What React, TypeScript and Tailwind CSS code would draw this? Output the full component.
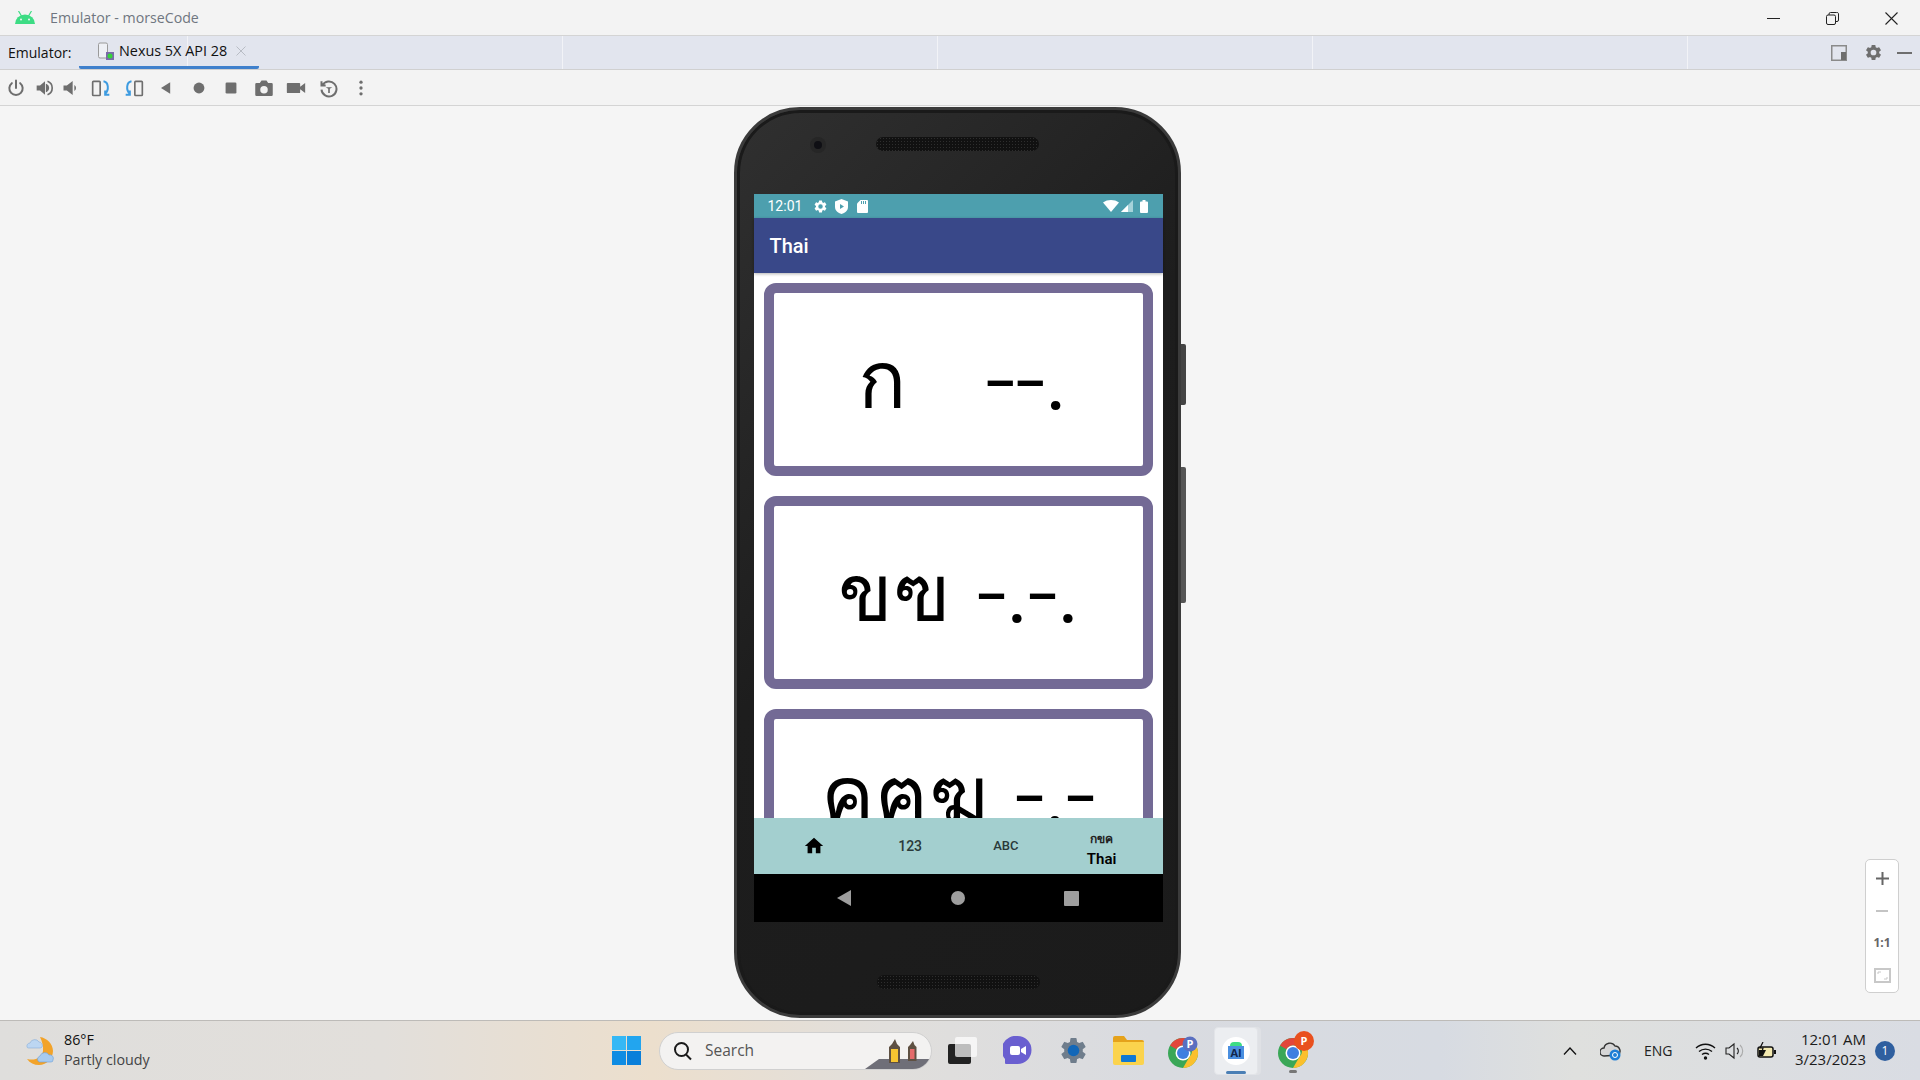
const Gear = ({ size = 16, color = "#6e6e6e" }: { size?: number; color?: string }) => (
  <svg width={size} height={size} viewBox="0 0 24 24" fill={color}>
    <path d="M19.14 12.94c.04-.3.06-.61.06-.94s-.02-.64-.07-.94l2.03-1.58a.5.5 0 0 0 .12-.61l-1.92-3.32a.5.5 0 0 0-.59-.22l-2.39.96a7 7 0 0 0-1.62-.94l-.36-2.54a.5.5 0 0 0-.48-.41h-3.84a.5.5 0 0 0-.48.41l-.36 2.54c-.59.24-1.13.57-1.62.94l-2.39-.96a.5.5 0 0 0-.59.22L2.72 8.87a.5.5 0 0 0 .12.61l2.03 1.58c-.05.3-.07.63-.07.94s.02.64.07.94l-2.03 1.58a.5.5 0 0 0-.12.61l1.92 3.32c.12.22.37.29.59.22l2.39-.96c.5.38 1.03.7 1.62.94l.36 2.54c.05.24.24.41.48.41h3.84c.24 0 .44-.17.48-.41l.36-2.54c.59-.24 1.13-.56 1.62-.94l2.39.96c.22.08.47 0 .59-.22l1.92-3.32a.5.5 0 0 0-.12-.61l-2.01-1.58zM12 15.6A3.6 3.6 0 1 1 12 8.4a3.6 3.6 0 0 1 0 7.2z" />
  </svg>
);

const gray = "#6e6e6e";
const blue = "#3d9be0";

const toolIcons = [
  { cls: "ml-[6px]", node: <path d="M12 3v9M7 6.2a8 8 0 1 0 10 0" fill="none" stroke={gray} strokeWidth="2.4" strokeLinecap="round" /> },
  { cls: "ml-[9px]", node: <><path d="M2 9h4l6-5v16l-6-5H2z" fill={gray} /><path d="M14 8.5a4 4 0 0 1 0 7zM15 4a8.5 8.5 0 0 1 0 16" fill="none" stroke={gray} strokeWidth="2" /></> },
  { cls: "ml-[6px]", node: <><path d="M3 9h4l7-5.5v17L7 15H3z" fill={gray} /><path d="M16 8.5a4 4 0 0 1 0 7z" fill={gray} /></> },
  { cls: "ml-[10px]", node: <><rect x="2" y="4" width="9" height="17" rx="1" fill="none" stroke={gray} strokeWidth="2" /><path d="M15 4c6 1 7 10 2 15M17 15v5h5" fill="none" stroke={blue} strokeWidth="2.4" /></> },
  { cls: "ml-[13px]", node: <><rect x="13" y="4" width="9" height="17" rx="1" fill="none" stroke={gray} strokeWidth="2" /><path d="M9 4C3 5 2 14 7 19M7 15v5H2" fill="none" stroke={blue} strokeWidth="2.4" /></> },
  { cls: "ml-[12px]", node: <path d="M17 5v14L6 12z" fill={gray} /> },
  { cls: "ml-[13px]", node: <circle cx="12" cy="12" r="6.5" fill={gray} /> },
  { cls: "ml-[12px]", node: <rect x="5.5" y="5.5" width="13" height="13" rx="1.5" fill={gray} /> },
  { cls: "ml-[13px]", node: <path d="M3 6h4l2-3h6l2 3h4a1.5 1.5 0 0 1 1.5 1.5V20a1.5 1.5 0 0 1-1.5 1.5H3A1.5 1.5 0 0 1 1.5 20V7.5A1.5 1.5 0 0 1 3 6zm9 3.5a4.5 4.5 0 1 0 0 9 4.5 4.5 0 0 0 0-9z" fill={gray} /> },
  { cls: "ml-[12px]", node: <path d="M2 6h14a1 1 0 0 1 1 1v3.5L23 6v12l-6-4.5V17a1 1 0 0 1-1 1H2a1 1 0 0 1-1-1V7a1 1 0 0 1 1-1z" fill={gray} /> },
  { cls: "ml-[13px]", node: <><path d="M3 4v5h5M4 9a9 9 0 1 1-1 5" fill="none" stroke={gray} strokeWidth="2.4" /><path d="M8 11h8l-3 2v5h-2v-5z" fill={gray} /></> },
  { cls: "ml-[12px]", node: <><circle cx="12" cy="5" r="2" fill={gray} /><circle cx="12" cy="12" r="2" fill={gray} /><circle cx="12" cy="19" r="2" fill={gray} /></> },
];

function TitleBar() {
  return (
    <div className="flex h-[34px] items-center bg-[#f3f3f3] border-b border-[#d4d4d4] pt-px shrink-0 box-content">
      <svg className="ml-[15px]" width="20" height="14" viewBox="0 0 20 14" fill="#3ddc84">
        <path d="M0 13a10 9.5 0 0 1 20 0z" />
        <path d="M3.5 0l3 5M16.5 0l-3 5" stroke="#3ddc84" strokeWidth="1.2" />
        <circle cx="6" cy="8.5" r="1" fill="#f3f3f3" />
        <circle cx="14" cy="8.5" r="1" fill="#f3f3f3" />
      </svg>
      <span className="ml-[15px] text-[14.2px] text-[#6f7680]">Emulator - morseCode</span>
      <div className="ml-auto flex items-center">
        <div className="h-px w-[13px] bg-[#222]" />
        <svg className="ml-[46px]" width="13" height="13" viewBox="0 0 13 13" fill="none" stroke="#222">
          <rect x="0.5" y="3" width="9" height="9.5" rx="1.5" />
          <path d="M3 3V2a1.5 1.5 0 0 1 1.5-1.5h6A1.5 1.5 0 0 1 12.5 2v6A1.5 1.5 0 0 1 11 9.5H9.5" />
        </svg>
        <svg className="ml-[46px] mr-[22px]" width="13" height="13" viewBox="0 0 13 13" stroke="#222" strokeWidth="1.1">
          <path d="M0.5 0.5l12 12M12.5 0.5l-12 12" />
        </svg>
      </div>
    </div>
  );
}

function TabBar() {
  return (
    <div className="relative flex h-[33px] items-center bg-[#e2e5ee] border-b border-[#d0d0d0] shrink-0 box-content">
      <div className="absolute inset-0 flex pointer-events-none">
        <div className="w-[188px] border-r border-[#f2f3f7]" />
        <div className="w-[375px] border-r border-[#f2f3f7]" />
        <div className="w-[375px] border-r border-[#f2f3f7]" />
        <div className="w-[375px] border-r border-[#f2f3f7]" />
        <div className="w-[375px] border-r border-[#f2f3f7]" />
      </div>
      <span className="relative ml-[8px] w-[71px] text-[14px] text-[#111]">Emulator:</span>
      <div className="relative flex h-[33px] w-[180px] items-center border-b-[3px] border-[#3f80cc] pl-[19px] rounded-b-[2px]">
        <svg width="16" height="18" viewBox="0 0 16 18">
          <rect x="0.5" y="1" width="9" height="15" rx="1.5" fill="#eef0f5" stroke="#9a9a9a" />
          <rect x="8" y="10" width="8" height="8" fill="#7a6aa8" />
          <circle cx="12" cy="14" r="2.5" fill="#35d43a" />
        </svg>
        <span className="ml-[5px] text-[14.4px] text-[#111]">Nexus 5X API 28</span>
        <svg className="ml-[9px]" width="10" height="10" viewBox="0 0 10 10" stroke="#b8bcc4" strokeWidth="1">
          <path d="M0.5 0.5l9 9M9.5 0.5l-9 9" />
        </svg>
      </div>
      <div className="relative ml-auto flex items-center">
        <svg width="16" height="16" viewBox="0 0 16 16">
          <rect x="0.75" y="0.75" width="14.5" height="14.5" fill="none" stroke="#8a8a8a" strokeWidth="1.5" />
          <rect x="10" y="7" width="5" height="8" fill="#6e6e6e" />
        </svg>
        <div className="ml-[17px]">
          <Gear size={19} />
        </div>
        <div className="ml-[14px] mr-[8px] h-[2px] w-[15px] bg-[#6e6e6e]" />
      </div>
    </div>
  );
}

function ToolBar() {
  return (
    <div className="flex h-[35px] items-center bg-[#f3f3f3] border-b border-[#d4d4d4] shrink-0 box-content">
      {toolIcons.map((icon, i) => (
        <svg key={i} className={icon.cls} width="20" height="20" viewBox="0 0 24 24">
          {icon.node}
        </svg>
      ))}
    </div>
  );
}

function MorseCard({ letters, code, className = "" }: { letters: string; code: string; className?: string }) {
  return (
    <div className={`flex h-[193px] shrink-0 items-center justify-center rounded-[12px] border-[10px] border-[#736a95] bg-white text-black ${className}`}>
      <div className="flex items-baseline whitespace-pre font-['Roboto','Noto_Sans',sans-serif] font-light text-[108px] leading-none">
        <span className="relative -top-[9px] text-[80px] font-normal">{letters}</span>
        {code.split("").map((c, i) =>
          c === "." ? (
            <span key={i} className="relative -top-[7px] inline-block w-[21px] text-center text-[84px] font-normal">.</span>
          ) : c === "-" ? (
            <span key={i} className="inline-block w-[30px] text-center">-</span>
          ) : (
            <span key={i}> </span>
          )
        )}
      </div>
    </div>
  );
}

function PhoneScreen() {
  return (
    <div className="flex h-[728px] w-[409px] flex-col font-['Roboto',sans-serif]">
      <div className="flex h-[24px] shrink-0 items-center bg-[#4d9fae] pl-[14px] pr-[15px] text-white">
        <span className="text-[14px]">12:01</span>
        <div className="ml-[11px]"><Gear size={15} color="#fff" /></div>
        <svg className="ml-[7px]" width="13" height="15" viewBox="0 0 13 15">
          <path d="M6.5 0L13 2.5V8c0 3.5-3 6-6.5 7C3 14 0 11.5 0 8V2.5z" fill="#fff" />
          <path d="M5 5l4 2.5L5 10z" fill="#4d9fae" />
        </svg>
        <svg className="ml-[9px]" width="11" height="13" viewBox="0 0 11 13">
          <path d="M3.5 0H10a1 1 0 0 1 1 1v11a1 1 0 0 1-1 1H1a1 1 0 0 1-1-1V3.5z" fill="#fff" />
          <path d="M4.5 1v3M6.5 1v3M8.5 1v3" stroke="#4d9fae" />
        </svg>
        <svg className="ml-auto" width="16" height="12" viewBox="0 0 16 12">
          <path d="M0 2.5C4.5-.8 11.5-.8 16 2.5L8 12z" fill="#fff" />
        </svg>
        <svg className="ml-[2px]" width="12" height="12" viewBox="0 0 12 12">
          <path d="M12 0v12H0z" fill="#a5d3da" />
          <path d="M7 5v7H0z" fill="#fff" />
        </svg>
        <svg className="ml-[7px]" width="8" height="13" viewBox="0 0 8 13">
          <path d="M2.5 0h3v1.5H7a1 1 0 0 1 1 1V12a1 1 0 0 1-1 1H1a1 1 0 0 1-1-1V2.5a1 1 0 0 1 1-1h1.5z" fill="#fff" />
        </svg>
      </div>
      <div className="relative z-10 flex h-[55px] shrink-0 items-center bg-[#394889] pl-[16px] text-[20px] font-medium text-white shadow-[0_1px_3px_rgba(0,0,0,0.3)]">
        Thai
      </div>
      <div className="flex h-[545px] shrink-0 flex-col gap-[20px] overflow-hidden bg-white p-[10px]">
        <MorseCard letters="ก" code={"   --."} className="pl-[8px]" />
        <MorseCard letters="ขฃ" code={" -.-."} />
        <MorseCard letters="คฅฆ" code={" -.-"} className="pb-[22px]" />
      </div>
      <div className="flex h-[56px] shrink-0 items-center bg-[#a3cfcf] px-[13px]">
        <div className="flex flex-1 justify-center">
          <svg width="22" height="22" viewBox="0 0 24 24" fill="#000">
            <path d="M10 20v-6h4v6h5v-8h3L12 3 2 12h3v8z" />
          </svg>
        </div>
        <div className="flex-1 text-center text-[14px] font-medium text-[#2a3a3a]">123</div>
        <div className="flex-1 text-center text-[13px] font-medium text-[#2a3a3a]">ABC</div>
        <div className="flex flex-1 flex-col items-center pt-[7px]">
          <span className="text-[12px] font-bold leading-[14px] text-[#222]">กขค</span>
          <span className="mt-[4px] text-[15px] font-semibold leading-[18px] text-black">Thai</span>
        </div>
      </div>
      <div className="flex h-[48px] shrink-0 items-center bg-black pl-[83px]">
        <svg width="14" height="16" viewBox="0 0 14 16" fill="#9e9e9e"><path d="M14 0v16L0 8z" /></svg>
        <div className="ml-[100px] h-[14px] w-[14px] rounded-full bg-[#9e9e9e]" />
        <div className="ml-[99px] h-[15px] w-[15px] rounded-[1px] bg-[#9e9e9e]" />
      </div>
    </div>
  );
}

const speaker =
  "h-[14px] w-[163px] rounded-full bg-[#111] bg-[radial-gradient(#2e2e2e_0.7px,transparent_0.8px)] bg-size-[3px_3px]";

function Phone() {
  return (
    <div className="relative mt-[1px] h-[911px] w-[447px] rounded-[66px] border-[3px] border-[#3b3b3b] bg-[linear-gradient(135deg,#303030,#1d1d1d_45%,#1b1b1b)] pl-[17px] shadow-[inset_0_0_0_3px_#1a1a1a]">
      <div className="absolute -right-[8px] top-[234px] h-[61px] w-[5px] rounded-r-[2px] bg-[#444]" />
      <div className="absolute -right-[8px] top-[357px] h-[136px] w-[5px] rounded-r-[2px] bg-[#555]" />
      <div className="flex h-[84px] items-start pl-[56px] pt-[27px]">
        <div className="flex h-[16px] w-[16px] items-center justify-center rounded-full bg-[#262626]">
          <div className="h-[8px] w-[8px] rounded-full bg-[#0f0f14]" />
        </div>
        <div className={`ml-[50px] ${speaker}`} />
      </div>
      <PhoneScreen />
      <div className="flex justify-start pl-[123px] pt-[53px]">
        <div className={speaker} />
      </div>
    </div>
  );
}

function ZoomControls() {
  return (
    <div className="absolute right-[21px] top-[753px] flex h-[134px] w-[34px] flex-col items-stretch rounded-[5px] border border-[#cfcfcf] bg-white pt-[2px] text-[#666]">
      <div className="flex h-[32.5px] items-center justify-center">
        <svg width="13" height="13" viewBox="0 0 13 13" stroke="#666" strokeWidth="2"><path d="M6.5 0v13M0 6.5h13" /></svg>
      </div>
      <div className="flex h-[32.5px] items-center justify-center">
        <div className="h-[2px] w-[12px] bg-[#c4c4c4]" />
      </div>
      <div className="flex h-[32.5px] items-center justify-center text-[12px] font-bold">1:1</div>
      <div className="flex h-[32.5px] items-center justify-center">
        <svg width="17" height="15" viewBox="0 0 17 15" fill="none">
          <rect x="1" y="1" width="15" height="13" stroke="#c8c8c8" strokeWidth="2" />
          <path d="M4 6V4h3M13 9v2h-3" stroke="#c8c8c8" />
        </svg>
      </div>
    </div>
  );
}

function WeatherIcon() {
  return (
    <svg width="30" height="30" viewBox="0 0 30 30">
      <path d="M15 1c7 1 13 7 13 14s-6 14-14 14c-5 0-9-2-12-6 8 2 15-1 16-8 .6-5-1-10-3-14z" fill="#f2a32a" />
      <path d="M2 11a3.5 3.5 0 0 1 3-4 5 5 0 0 1 9-1 3.5 3.5 0 0 1 3 5 2 2 0 0 1-2 1H3.5A1.5 1.5 0 0 1 2 11z" fill="#bcd6f2" stroke="#86add9" strokeWidth="0.6" />
      <path d="M13 25a3.5 3.5 0 0 1 2-5 5 5 0 0 1 9-1 3.5 3.5 0 0 1 4 5 2 2 0 0 1-2 2H14.5z" fill="#a8cbef" stroke="#6c9fd9" strokeWidth="0.6" />
    </svg>
  );
}

function ChromeIcon({ light }: { light?: boolean }) {
  return (
    <svg width="38" height="38" viewBox="0 0 38 38" className="overflow-visible">
      <circle cx="15" cy="21" r="15" fill="#3aa757" />
      <path d="M15 6a15 15 0 0 1 13 7.5H15a7.5 7.5 0 0 0-6.5 3.75L2 13.5A15 15 0 0 1 15 6z" fill="#e2463a" />
      <path d="M28 13.5A15 15 0 0 1 15 36l6.5-11.25a7.5 7.5 0 0 0 0-11.25z" fill="#fbc02d" />
      <circle cx="15" cy="21" r="7.5" fill="#fff" />
      <circle cx="15" cy="21" r="6" fill="#3f7fe0" />
      <circle cx={light ? 22 : 26} cy={light ? 12 : 9} r={light ? 7.5 : 10} fill={light ? "#5a6fc0" : "#e9501e"} />
      <text x={light ? 22 : 26} y={light ? 16 : 13} textAnchor="middle" fontSize="11" fontWeight="700" fill="#fff" fontFamily="Open Sans">P</text>
    </svg>
  );
}

function TaskBar() {
  return (
    <div className="flex h-[60px] shrink-0 items-center border-t border-[#bdbbb8] bg-[linear-gradient(90deg,#dfdedc,#e2dfdb_20%,#ecdfcd_34%,#e1dfdc_46%,#d9dbe0_60%,#d7dbe2_75%,#dfe0de_82%,#d9dce3)] text-[#1c1c1c]">
      <div className="ml-[25px]"><WeatherIcon /></div>
      <div className="-mt-[2px] ml-[9px] w-[130px] text-[14.3px] leading-[20px]">
        <div className="text-[#111]">86°F</div>
        <div className="text-[#444]">Partly cloudy</div>
      </div>
      <svg className="ml-[418px]" width="29" height="29" viewBox="0 0 29 29">
        <rect width="14" height="14" fill="#35b8f5" />
        <rect x="15" width="14" height="14" fill="#22a5ef" />
        <rect y="15" width="14" height="14" fill="#0f8ce3" />
        <rect x="15" y="15" width="14" height="14" fill="#0a7fda" />
      </svg>
      <div className="relative ml-[18px] flex h-[38px] w-[273px] items-center overflow-hidden rounded-full border border-[#d0d0d0] bg-[#f3f2f1] pl-[13px]">
        <svg width="20" height="20" viewBox="0 0 20 20" fill="none" stroke="#1a1a1a" strokeWidth="2">
          <circle cx="8.5" cy="8.5" r="6.5" />
          <path d="M13 13.5l5 5" />
        </svg>
        <span className="ml-[12px] text-[15.5px] text-[#555]">Search</span>
        <svg className="absolute right-[2px] bottom-0" width="64" height="30" viewBox="0 0 64 30">
          <path d="M0 30L14 20h50v10z" fill="#6f6f78" />
          <path d="M30 0l2 5 3 3v16H24V8l3-3z" fill="#5e5042" />
          <rect x="26" y="10" width="7" height="13" fill="#f7c531" />
          <path d="M48 2l1.5 4 2 2v14H43V8l2-2z" fill="#5e5042" />
          <rect x="45" y="10" width="4.5" height="10" fill="#e56b6b" />
        </svg>
      </div>
      <div className="relative ml-[16px] h-[27px] w-[29px]">
        <div className="absolute bottom-0 left-0 h-[20px] w-[23px] rounded-[2px] bg-[#222]" />
        <div className="absolute right-0 top-0 h-[20px] w-[22px] rounded-[2px] bg-white/70" />
      </div>
      <svg className="ml-[26px]" width="29" height="29" viewBox="0 0 29 29">
        <path d="M14.5 0a14 14 0 0 1 0 28H3a1 1 0 0 1-1-1v-4A14 14 0 0 1 14.5 0z" fill="#6a5fd0" />
        <rect x="7" y="10" width="10" height="9" rx="2" fill="#fff" />
        <path d="M18 13l5-3v9l-5-3z" fill="#fff" />
      </svg>
      <div className="ml-[26px]">
        <svg width="31" height="31" viewBox="0 0 24 24" fill="#6f7d8c">
          <path d="M19.14 12.94c.04-.3.06-.61.06-.94s-.02-.64-.07-.94l2.03-1.58a.5.5 0 0 0 .12-.61l-1.92-3.32a.5.5 0 0 0-.59-.22l-2.39.96a7 7 0 0 0-1.62-.94l-.36-2.54a.5.5 0 0 0-.48-.41h-3.84a.5.5 0 0 0-.48.41l-.36 2.54c-.59.24-1.13.57-1.62.94l-2.39-.96a.5.5 0 0 0-.59.22L2.72 8.87a.5.5 0 0 0 .12.61l2.03 1.58c-.05.3-.07.63-.07.94s.02.64.07.94l-2.03 1.58a.5.5 0 0 0-.12.61l1.92 3.32c.12.22.37.29.59.22l2.39-.96c.5.38 1.03.7 1.62.94l.36 2.54c.05.24.24.41.48.41h3.84c.24 0 .44-.17.48-.41l.36-2.54c.59-.24 1.13-.56 1.62-.94l2.39.96c.22.08.47 0 .59-.22l1.92-3.32a.5.5 0 0 0-.12-.61l-2.01-1.58z" />
          <circle cx="12" cy="12" r="4.5" fill="#1267b8" />
        </svg>
      </div>
      <svg className="ml-[24px]" width="31" height="29" viewBox="0 0 31 29">
        <path d="M0 2a2 2 0 0 1 2-2h9l3 4h15a2 2 0 0 1 2 2v3H0z" fill="#e5a21b" />
        <path d="M0 6h31v21a2 2 0 0 1-2 2H2a2 2 0 0 1-2-2z" fill="#fbd34d" />
        <rect x="8" y="19" width="15" height="7" rx="1" fill="#0f78d4" />
      </svg>
      <div className="ml-[24px] h-[38px] w-[38px]"><ChromeIcon light /></div>
      <div className="ml-[8px] flex h-[48px] w-[44px] flex-col items-center rounded-[4px] border border-[#e2e4e8] bg-[#eceef1] shadow-[3px_0_0_#dfe1e5]">
        <div className="mt-[9px] flex h-[28px] w-[28px] flex-col items-center justify-center rounded-full bg-white">
          <div className="h-[4px] w-[12px] rounded-t-full bg-[#3ddc84]" />
          <div className="h-[13px] w-[16px] bg-[#4a8fe0] text-center text-[11px] font-bold leading-[13px] text-[#10254a]">AI</div>
        </div>
        <div className="mt-[6px] h-[3px] w-[20px] rounded-full bg-[#4b7fb5]" />
      </div>
      <div className="relative ml-[20px] h-[38px] w-[38px]">
        <ChromeIcon />
        <div className="absolute left-[11px] -bottom-[3px] h-[3px] w-[8px] rounded-full bg-[#777]" />
      </div>
      <div className="ml-auto flex items-center">
        <svg width="14" height="8" viewBox="0 0 14 8" fill="none" stroke="#111" strokeWidth="1.3">
          <path d="M1 7.5L7 1l6 6.5" />
        </svg>
        <svg className="ml-[23px]" width="22" height="20" viewBox="0 0 22 20">
          <path d="M4 15a4 4 0 0 1 0-8 6 6 0 0 1 11-2 5 5 0 0 1 3 9z" fill="#d6d6d6" stroke="#333" strokeWidth="1.4" />
          <circle cx="15" cy="14" r="5.5" fill="#1e7fd6" />
          <circle cx="15" cy="14" r="2.5" fill="none" stroke="#fff" />
        </svg>
        <span className="ml-[22px] w-[29px] text-[14px] text-[#222]">ENG</span>
        <svg className="ml-[22px]" width="21" height="18" viewBox="0 0 21 18" fill="none" stroke="#111" strokeWidth="1.4">
          <path d="M1 6a14 14 0 0 1 19 0M4 9.5a10 10 0 0 1 13 0M7 12.5a6 6 0 0 1 7 0" />
          <circle cx="10.5" cy="16" r="1" fill="#111" />
        </svg>
        <svg className="ml-[9px]" width="20" height="20" viewBox="0 0 20 20" fill="none" stroke="#222" strokeWidth="1.1">
          <path d="M1 7h3l5-4v14l-5-4H1z" />
          <path d="M12 7a4 4 0 0 1 0 6" />
          <path d="M15 4a8 8 0 0 1 0 12" stroke="#aaa" />
        </svg>
        <svg className="ml-[11px]" width="21" height="18" viewBox="0 0 21 18">
          <rect x="2" y="5" width="15" height="10" rx="2" fill="#f3e9b0" stroke="#111" strokeWidth="1.5" />
          <rect x="18" y="8" width="2" height="4" fill="#111" />
          <path d="M3 8h7l-3 6H3z" fill="#111" />
          <path d="M7 0L4 6h3l-1 4" fill="none" stroke="#111" strokeWidth="1.2" />
        </svg>
        <div className="-mt-[3px] ml-[14px] w-[75px] text-right text-[15px] leading-[20px] text-[#1c1c1c]">
          <div>12:01 AM</div>
          <div>3/23/2023</div>
        </div>
        <div className="ml-[9px] mr-[25px] flex h-[20px] w-[20px] items-center justify-center rounded-full bg-[#2f5f9f] text-[12px] text-white">
          1
        </div>
      </div>
    </div>
  );
}

export default function App() {
  return (
    <div className="flex h-screen w-full flex-col overflow-hidden bg-[#f5f5f5] font-['Open_Sans','Noto_Sans',sans-serif]">
      <TitleBar />
      <TabBar />
      <ToolBar />
      <div className="relative flex flex-1 justify-center pr-[6px]">
        <Phone />
        <ZoomControls />
      </div>
      <TaskBar />
    </div>
  );
}
